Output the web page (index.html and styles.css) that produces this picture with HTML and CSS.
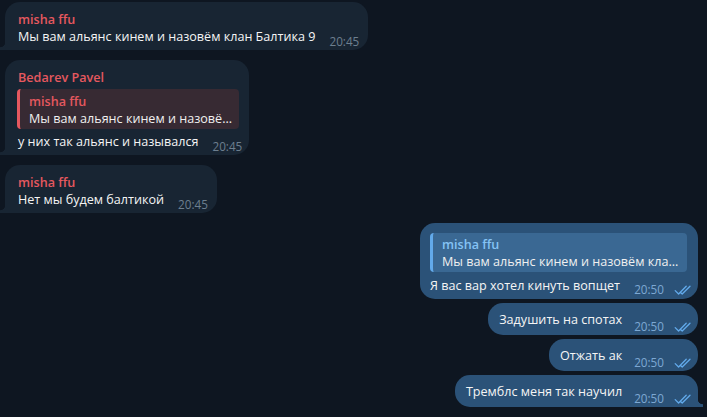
FILE: index.html
```html
<!DOCTYPE html>
<html lang="ru">
<head>
<meta charset="utf-8">
<link rel="stylesheet" href="styles.css">
</head>
<body>
<div class="chat">
  <div class="row in">
    <div class="bubble in-b tail-l">
      <div class="name">misha ffu</div>
      <div class="line"><span class="text">Мы вам альянс кинем и назовём клан Балтика 9</span><span class="meta"><span class="time">20:45</span></span></div>
    </div>
  </div>
  <div class="row in group-start">
    <div class="bubble in-b tail-l w244">
      <div class="name">Bedarev Pavel</div>
      <div class="reply reply-in">
        <div class="r-name">misha ffu</div>
        <div class="r-text">Мы вам альянс кинем и назовё...</div>
      </div>
      <div class="line"><span class="text">у них так альянс и назывался</span><span class="meta"><span class="time">20:45</span></span></div>
    </div>
  </div>
  <div class="row in group-start">
    <div class="bubble in-b tail-l">
      <div class="name">misha ffu</div>
      <div class="line"><span class="text">Нет мы будем балтикой</span><span class="meta"><span class="time">20:45</span></span></div>
    </div>
  </div>
  <div class="row out group-start">
    <div class="bubble out-b w278">
      <div class="reply reply-out">
        <div class="r-name">misha ffu</div>
        <div class="r-text">Мы вам альянс кинем и назовём кла...</div>
      </div>
      <div class="line"><span class="text">Я вас вар хотел кинуть вопщет</span><span class="meta"><span class="time">20:50</span><svg class="check" viewBox="0 0 17 10" width="17" height="10"><path d="M1.2 5.6 L4.6 9 L12.2 1.2 M8.2 9 L16 1.2 M6.3 7.3 L8.2 9" fill="none" stroke="currentColor" stroke-width="1.3" stroke-linecap="round" stroke-linejoin="round"/></svg></span></div>
    </div>
  </div>
  <div class="row out">
    <div class="bubble out-b single">
      <div class="line"><span class="text">Задушить на спотах</span><span class="meta"><span class="time">20:50</span><svg class="check" viewBox="0 0 17 10" width="17" height="10"><path d="M1.2 5.6 L4.6 9 L12.2 1.2 M8.2 9 L16 1.2 M6.3 7.3 L8.2 9" fill="none" stroke="currentColor" stroke-width="1.3" stroke-linecap="round" stroke-linejoin="round"/></svg></span></div>
    </div>
  </div>
  <div class="row out">
    <div class="bubble out-b single">
      <div class="line"><span class="text">Отжать ак</span><span class="meta"><span class="time">20:50</span><svg class="check" viewBox="0 0 17 10" width="17" height="10"><path d="M1.2 5.6 L4.6 9 L12.2 1.2 M8.2 9 L16 1.2 M6.3 7.3 L8.2 9" fill="none" stroke="currentColor" stroke-width="1.3" stroke-linecap="round" stroke-linejoin="round"/></svg></span></div>
    </div>
  </div>
  <div class="row out">
    <div class="bubble out-b single tail-r">
      <div class="line"><span class="text">Тремблс меня так научил</span><span class="meta"><span class="time">20:50</span><svg class="check" viewBox="0 0 17 10" width="17" height="10"><path d="M1.2 5.6 L4.6 9 L12.2 1.2 M8.2 9 L16 1.2 M6.3 7.3 L8.2 9" fill="none" stroke="currentColor" stroke-width="1.3" stroke-linecap="round" stroke-linejoin="round"/></svg></span></div>
    </div>
  </div>
</div>
</body>
</html>
```
FILE: styles.css
```css
html, body {
  margin: 0;
  padding: 0;
  background: #0e1621;
  width: 707px;
  height: 417px;
  overflow: hidden;
}
body {
  font-family: "Open Sans", "Noto Sans", sans-serif;
  font-size: 12.6px;
  color: #f5f5f5;
}
.chat {
  display: flex;
  flex-direction: column;
  gap: 4px;
  padding: 2px 9px 0 5px;
}
.row {
  display: flex;
}
.row.out {
  justify-content: flex-end;
}
.group-start {
  margin-top: 6px;
}
.bubble {
  position: relative;
  border-radius: 15px;
  line-height: 17px;
  box-sizing: border-box;
}
.in-b {
  background: #182533;
  padding: 9px 9px 5px 13px;
}
.out-b {
  background: #2b5278;
  padding: 8px 7px 7px 11px;
}
.tail-l {
  border-bottom-left-radius: 0;
}
.tail-l::before {
  content: "";
  position: absolute;
  left: -5px;
  bottom: 0;
  width: 5px;
  height: 8px;
  background: radial-gradient(circle at 0 0, transparent 5px, #182533 5.6px);
}
.tail-r {
  border-bottom-right-radius: 0;
}
.tail-r::after {
  content: "";
  position: absolute;
  right: -5px;
  bottom: 0;
  width: 5px;
  height: 8px;
  background: radial-gradient(circle at 100% 0, transparent 5px, #2b5278 5.6px);
}
.w244 {
  width: 244px;
}
.w278 {
  width: 278px;
  padding: 10px 7px 5px 10px;
}
.name {
  color: #e5585f;
  font-weight: 600;
}
.line {
  display: flex;
  align-items: flex-start;
}
.text {
  white-space: nowrap;
}
.meta {
  display: flex;
  align-items: center;
  margin-left: 14px;
  margin-top: 5px;
  margin-bottom: -5px;
  font-size: 11.7px;
  white-space: nowrap;
}
.in-b .time {
  color: #6d7f8f;
}
.out-b .time {
  color: #7da8d3;
}
.out-b .meta {
  margin-left: 12px;
}
.single .meta {
  margin-top: 7px;
  margin-bottom: -7px;
}
.w278 .meta {
  margin-top: 4px;
  margin-bottom: -4px;
}
.out-b .line {
  justify-content: space-between;
}
.check {
  color: #62aaeb;
  margin-left: 10px;
  margin-top: 1px;
}
.reply {
  border-radius: 4px;
  border-left: 3px solid;
  white-space: nowrap;
  overflow: hidden;
}
.reply-in {
  margin: 3px 1px 4px -1px;
  padding: 4px 6px 2px 9px;
  background: #372a33;
  border-left-color: #e5585f;
}
.reply-in .r-name {
  color: #e5585f;
  font-weight: 600;
}
.reply-out {
  margin: 0 4px 5px 0;
  padding: 3px 6px 2px 9px;
  background: #3a6893;
  border-left-color: #62aaeb;
}
.reply-out .r-name {
  color: #85c3f5;
  font-weight: 600;
}
.reply .r-text {
  color: #f0f0f0;
}
```
